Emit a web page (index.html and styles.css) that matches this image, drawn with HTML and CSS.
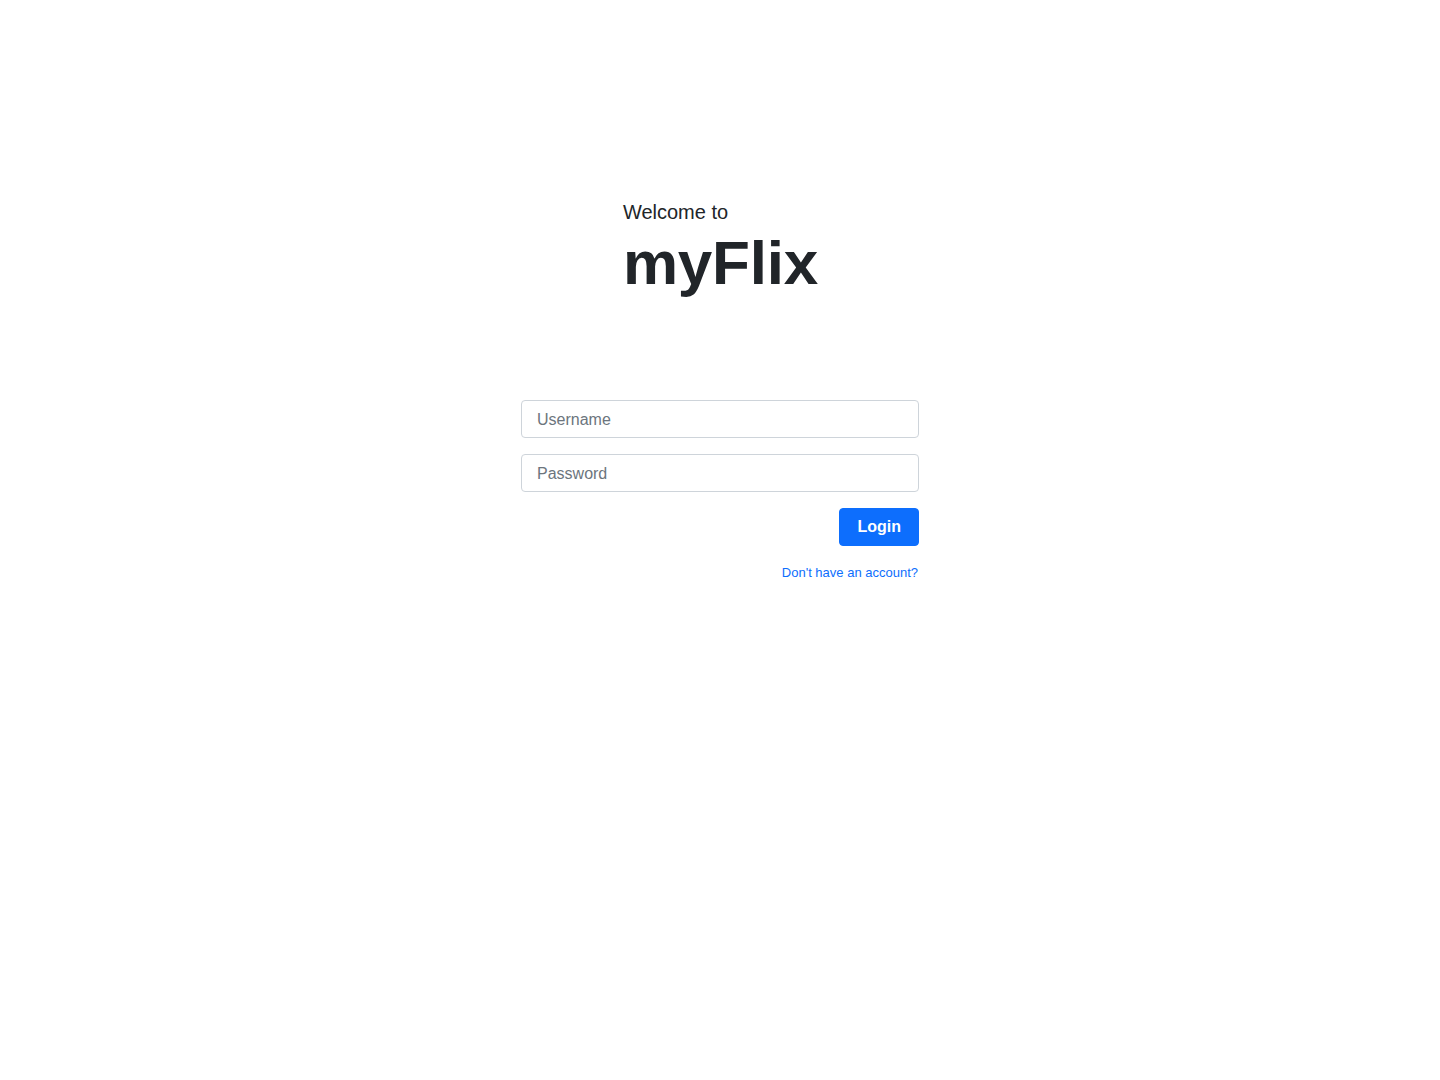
FILE: index.html
```html
<!DOCTYPE html>
<html lang="en">
<head>
<meta charset="utf-8">
<title>myFlix</title>
<link rel="stylesheet" href="styles.css">
</head>
<body>
<main class="page">
  <header class="brand">
    <div class="brand-inner">
      <p class="welcome">Welcome to</p>
      <h1 class="title">myFlix</h1>
    </div>
  </header>
  <form class="login-form">
    <input class="field" type="text" placeholder="Username">
    <input class="field" type="password" placeholder="Password">
    <div class="actions">
      <button class="btn" type="button">Login</button>
    </div>
    <div class="links">
      <a class="signup" href="#">Don't have an account?</a>
    </div>
  </form>
</main>
</body>
</html>
```
FILE: styles.css
```css
* { box-sizing: border-box; }
html, body { margin: 0; padding: 0; background: #fff; }
body {
  font-family: "Liberation Sans", Arial, sans-serif;
  color: #212529;
  font-size: 16px;
  line-height: 1.5;
}
.page {
  display: flex;
  flex-direction: column;
  align-items: center;
  padding-top: 197px;
}
.brand {
  display: flex;
  justify-content: center;
  width: 100%;
}
.brand-inner {
  display: flex;
  flex-direction: column;
  align-items: flex-start;
  margin-left: 1px;
}
.welcome {
  margin: 0;
  font-size: 20px;
  line-height: 30px;
}
.title {
  margin: 4px 0 0;
  font-size: 62px;
  font-weight: 700;
  line-height: 64px;
  letter-spacing: -0.2px;
}
.login-form {
  width: 398px;
  margin-top: 105px;
  display: flex;
  flex-direction: column;
  gap: 16px;
}
.field {
  display: block;
  width: 100%;
  height: 38px;
  padding: 7px 15px 5px;
  font-family: "Liberation Sans", Arial, sans-serif;
  font-size: 16px;
  color: #212529;
  background: #fff;
  border: 1px solid #ced4da;
  border-radius: 4px;
  outline: none;
}
.field::placeholder { color: #6c757d; }
.actions {
  display: flex;
  justify-content: flex-end;
}
.btn {
  height: 38px;
  padding: 0 17px;
  font-family: "Liberation Sans", Arial, sans-serif;
  font-size: 16px;
  font-weight: 700;
  color: #fff;
  background: #0d6efd;
  border: 1px solid #0d6efd;
  border-radius: 4px;
  cursor: pointer;
}
.links {
  display: flex;
  justify-content: flex-end;
}
.signup {
  font-size: 13px;
  line-height: 22px;
  color: #0d6efd;
  text-decoration: none;
  margin-right: 1px;
}
```
